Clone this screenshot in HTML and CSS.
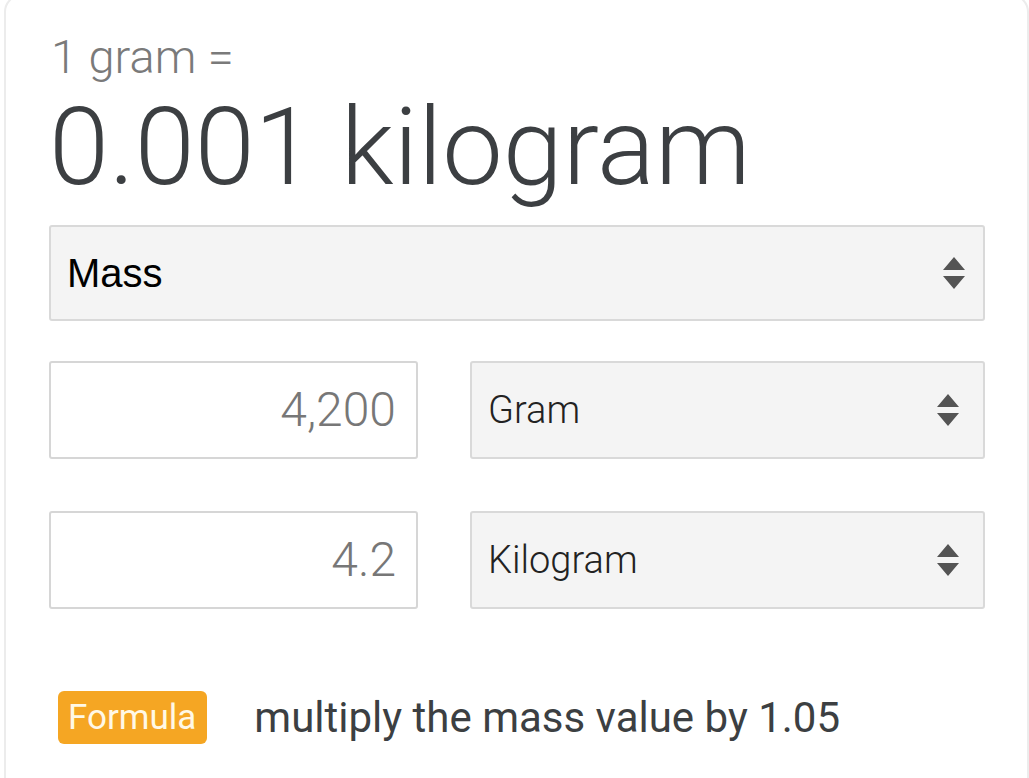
FILE: index.html
```html
<!DOCTYPE html>
<html>
<head>
<meta charset="utf-8">
<link rel="stylesheet" href="styles.css">
</head>
<body>
<div class="card">
  <div class="label">1 gram =</div>
  <div class="result">0.001 kilogram</div>
  <div class="select select-wide">
    <span class="mass">Mass</span>
    <svg class="arrows" width="22" height="33" viewBox="0 0 22 33"><path d="M11 0 L22 13 L0 13 Z M0 19 L22 19 L11 32 Z" fill="#545454"/></svg>
  </div>
  <div class="row">
    <div class="input">4,200</div>
    <div class="select select-unit">
      <span class="unit">Gram</span>
      <svg class="arrows" width="22" height="33" viewBox="0 0 22 33"><path d="M11 0 L22 13 L0 13 Z M0 19 L22 19 L11 32 Z" fill="#545454"/></svg>
    </div>
  </div>
  <div class="row">
    <div class="input">4.2</div>
    <div class="select select-unit">
      <span class="unit">Kilogram</span>
      <svg class="arrows" width="22" height="33" viewBox="0 0 22 33"><path d="M11 0 L22 13 L0 13 Z M0 19 L22 19 L11 32 Z" fill="#545454"/></svg>
    </div>
  </div>
  <div class="formula">
    <span class="badge">Formula</span>
    <span class="formula-text">multiply the mass value by 1.05</span>
  </div>
</div>
</body>
</html>
```
FILE: styles.css
```css
html, body {
  margin: 0;
  padding: 0;
  background: #ffffff;
}
body {
  width: 1029px;
  height: 778px;
  overflow: hidden;
  font-family: Roboto, "Liberation Sans", sans-serif;
}
.card {
  margin: -6px 0 0 4px;
  width: 1025px;
  height: 800px;
  box-sizing: border-box;
  border: 2px solid #ececec;
  border-radius: 18px 18px 0 0;
  padding: 33px 42px 0 43px;
}
.label {
  font-weight: 300;
  font-size: 47px;
  line-height: 56px;
  color: #7a7a7a;
  padding-left: 2px;
}
.result {
  margin-top: 2px;
  font-weight: 300;
  font-size: 108px;
  line-height: 120px;
  color: #3c3f42;
}
.select {
  display: flex;
  align-items: center;
  justify-content: space-between;
  box-sizing: border-box;
  background: #f4f4f4;
  border: 2px solid #d9d9d9;
  border-radius: 3px;
}
.select-wide {
  margin-top: 18px;
  height: 96px;
  padding: 0 18px 0 16px;
}
.mass {
  font-family: "Liberation Sans", Arial, sans-serif;
  font-size: 40px;
  line-height: 1;
  color: #000;
}
.arrows {
  display: block;
}
.row {
  display: flex;
  gap: 52px;
  margin-top: 40px;
}
.row + .row {
  margin-top: 52px;
}
.input {
  width: 369px;
  height: 98px;
  box-sizing: border-box;
  border: 2px solid #d6d6d6;
  border-radius: 3px;
  background: #fff;
  display: flex;
  align-items: center;
  justify-content: flex-end;
  padding-right: 20px;
  font-weight: 300;
  font-size: 48px;
  line-height: 1;
  color: #777;
}
.select-unit {
  width: 515px;
  height: 98px;
  padding: 0 24px 0 16px;
}
.unit {
  font-weight: 300;
  font-size: 38px;
  line-height: 1;
  color: #222;
}
.formula {
  display: flex;
  align-items: center;
  margin-top: 82px;
  padding-left: 9px;
}
.badge {
  display: inline-block;
  background: #f5a623;
  color: #fff8e6;
  font-size: 35px;
  line-height: 53px;
  padding: 0 11px 0 10px;
  border-radius: 6px;
}
.formula-text {
  margin-left: 47px;
  font-size: 42px;
  color: #3c3f42;
}
```
